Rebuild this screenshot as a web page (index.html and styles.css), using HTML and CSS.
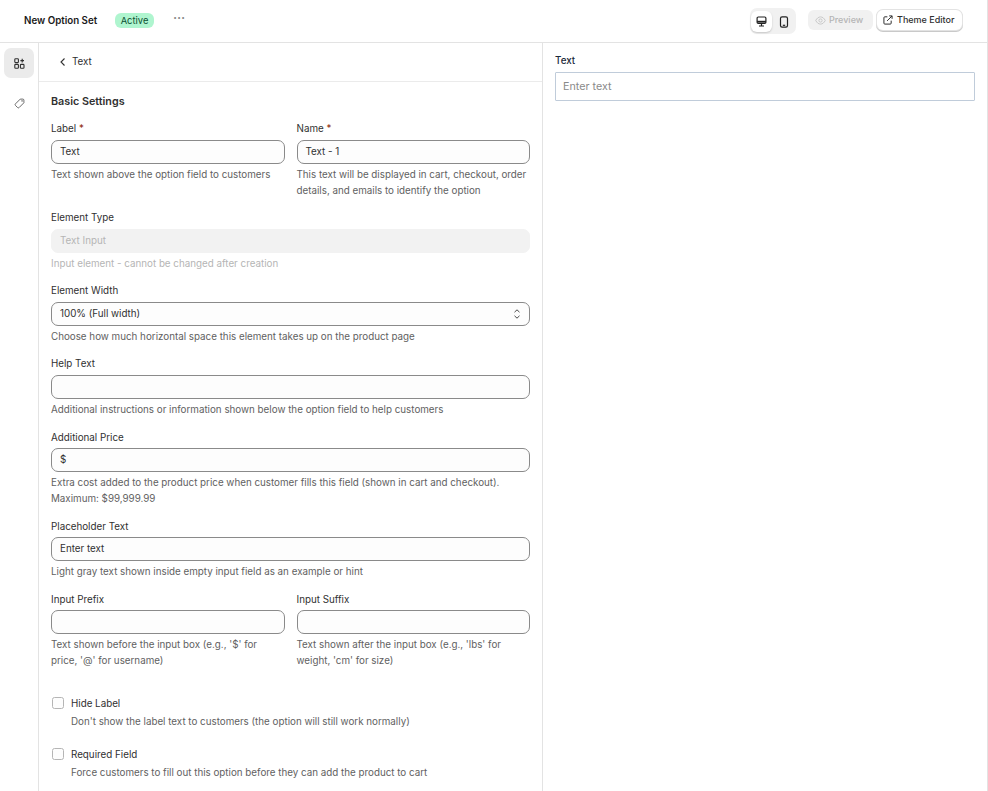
FILE: index.html
```html
<!DOCTYPE html>
<html lang="en">
<head>
<meta charset="utf-8">
<title>New Option Set</title>
<link rel="stylesheet" href="styles.css">
</head>
<body>
<header class="topbar">
  <div class="top-left">
    <h1 class="title">New Option Set</h1>
    <span class="badge">Active</span>
    <button class="more" aria-label="More">•••</button>
  </div>
  <div class="top-right">
    <div class="device-toggle">
      <span class="device active">
        <svg width="11" height="11" viewBox="0 0 11 11" fill="none" stroke="#222" stroke-width="1.2"><rect x="1.100" y="1" width="8.800" height="6.400" rx="1.200"/><path d="M1.100 5.700h8.800" stroke-width="1.800"/><path d="M5.500 7.500v2.300M3 10h5"/></svg>
      </span>
      <span class="device">
        <svg width="10" height="12" viewBox="0 0 10 12" fill="none" stroke="#222" stroke-width="1.200"><rect x="1.500" y=".8" width="7" height="10.400" rx="1.600"/><path d="M3.800 9.300h2.400"/></svg>
      </span>
    </div>
    <button class="btn btn-disabled">
      <svg width="11" height="9" viewBox="0 0 12 10" fill="none" stroke="#c4c4c4" stroke-width="1"><path d="M.7 5C2 2.500 3.800 1 6 1s4 1.500 5.300 4C10 7.500 8.200 9 6 9S2 7.500.7 5z"/><circle cx="6" cy="5" r="1.800"/></svg>
      Preview
    </button>
    <button class="btn btn-theme">
      <svg width="10" height="10" viewBox="0 0 11 11" fill="none" stroke="#303030" stroke-width="1.100"><path d="M4.800 2H2a1 1 0 0 0-1 1v6a1 1 0 0 0 1 1h6a1 1 0 0 0 1-1V6.200"/><path d="M4.500 6.500L10 1M6.800 1H10v3.200"/></svg>
      Theme Editor
    </button>
  </div>
</header>
<div class="main">
  <nav class="rail">
    <span class="rail-item active">
      <svg width="11" height="11" viewBox="0 0 11 11" fill="none" stroke="#303030" stroke-width="1.100"><rect x=".8" y=".8" width="3.600" height="3.800" rx=".8"/><rect x=".8" y="6.400" width="3.600" height="3.800" rx=".8"/><rect x="6.400" y="6.400" width="3.600" height="3.800" rx=".8"/><path d="M8.200 .8v3.600M6.400 2.600h3.600"/></svg>
    </span>
    <span class="rail-item">
      <svg width="11" height="11" viewBox="0 0 12 12" fill="none" stroke="#5c5c5c" stroke-width="1"><path d="M6.800 1.200h2.800a1.200 1.200 0 0 1 1.200 1.200v2.800L5.600 10.400a1.200 1.200 0 0 1-1.700 0L1.600 8.100a1.200 1.200 0 0 1 0-1.700z"/><circle cx="8.800" cy="3.200" r=".4"/></svg>
    </span>
  </nav>
  <section class="editor">
    <div class="crumb">
      <svg width="8" height="10" viewBox="0 0 8 10" fill="none" stroke="#303030" stroke-width="1.100"><path d="M5.500 1.500L2 5l3.500 3.500"/></svg>
      <span>Text</span>
    </div>
    <div class="form">
      <h2 class="section-title">Basic Settings</h2>
      <div class="two">
        <div class="field">
          <label class="label">Label <span class="req">*</span></label>
          <div class="input">Text</div>
          <p class="help">Text shown above the option field to customers</p>
        </div>
        <div class="field">
          <label class="label">Name <span class="req">*</span></label>
          <div class="input">Text - 1</div>
          <p class="help">This text will be displayed in cart, checkout, order details, and emails to identify the option</p>
        </div>
      </div>
      <div class="field">
        <label class="label">Element Type</label>
        <div class="input input-disabled">Text Input</div>
        <p class="help help-muted">Input element - cannot be changed after creation</p>
      </div>
      <div class="field">
        <label class="label">Element Width</label>
        <div class="input input-select">
          <span>100% (Full width)</span>
          <svg width="8" height="12" viewBox="0 0 8 12" fill="none" stroke="#4a4a4a" stroke-width="1"><path d="M1.500 4.200L4 1.800l2.500 2.400M1.500 7.800L4 10.200l2.500-2.400"/></svg>
        </div>
        <p class="help">Choose how much horizontal space this element takes up on the product page</p>
      </div>
      <div class="field">
        <label class="label">Help Text</label>
        <div class="input"></div>
        <p class="help">Additional instructions or information shown below the option field to help customers</p>
      </div>
      <div class="field">
        <label class="label">Additional Price</label>
        <div class="input">$</div>
        <p class="help">Extra cost added to the product price when customer fills this field (shown in cart and checkout). Maximum: $99,999.99</p>
      </div>
      <div class="field">
        <label class="label">Placeholder Text</label>
        <div class="input">Enter text</div>
        <p class="help">Light gray text shown inside empty input field as an example or hint</p>
      </div>
      <div class="two">
        <div class="field">
          <label class="label">Input Prefix</label>
          <div class="input"></div>
          <p class="help">Text shown before the input box (e.g., '$' for price, '@' for username)</p>
        </div>
        <div class="field">
          <label class="label">Input Suffix</label>
          <div class="input"></div>
          <p class="help">Text shown after the input box (e.g., 'lbs' for weight, 'cm' for size)</p>
        </div>
      </div>
      <div class="checks">
        <div class="check">
          <span class="box"></span>
          <div>
            <div class="check-label">Hide Label</div>
            <p class="help">Don't show the label text to customers (the option will still work normally)</p>
          </div>
        </div>
        <div class="check">
          <span class="box"></span>
          <div>
            <div class="check-label">Required Field</div>
            <p class="help">Force customers to fill out this option before they can add the product to cart</p>
          </div>
        </div>
      </div>
    </div>
  </section>
  <aside class="preview">
    <label class="preview-label">Text</label>
    <div class="preview-input">Enter text</div>
  </aside>
</div>
</body>
</html>
```
FILE: styles.css
```css
* { box-sizing: border-box; }
html, body { margin: 0; height: 100%; overflow: hidden; }
body {
  font-family: Inter, "Noto Sans", sans-serif;
  font-size: 9.800px;
  line-height: 16px;
  color: #303030;
  background: #fff;
  display: flex;
  flex-direction: column;
}
button { font: inherit; background: none; border: 0; padding: 0; }
p, h1, h2 { margin: 0; }

.topbar {
  height: 43px;
  flex: none;
  border-bottom: 1px solid #e3e3e3;
  display: flex;
  justify-content: space-between;
  align-items: center;
  padding: 0 25px 0 24px;
  border-right: 1px solid #e3e3e3;
}
.top-left { display: flex; align-items: center; }
.title { font-size: 9.750px; font-weight: 600; color: #1a1a1a; line-height: 16px; margin-right: 17.500px; }
.badge {
  background: #aff5cf;
  color: #0c5132;
  border-radius: 6px;
  height: 15px;
  line-height: 15px;
  padding: 0 6px;
  font-size: 9.400px;
  margin-top: -1px;
  margin-right: 19px;
}
.more { color: #8a8a8a; font-size: 6.500px; letter-spacing: .3px; line-height: 10px; margin-top: -6px; }

.top-right { display: flex; align-items: center; }
.device-toggle {
  display: flex;
  background: #f1f1f1;
  border-radius: 7px;
  padding: 3px 2px 2px 1px;
  height: 26px;
  margin-right: 12px;
  gap: 2px;
}
.device { width: 21px; height: 21px; display: flex; align-items: center; justify-content: center; border-radius: 6px; }
.device + .device { width: 20px; }
.device.active { background: #fff; box-shadow: 0 1px 2px rgba(0,0,0,.18); }
.btn {
  height: 20px;
  border-radius: 6px;
  display: flex;
  align-items: center;
  font-weight: 550;
  font-size: 9px;
  margin-top: -2px;
}
.btn-disabled { background: #f1f1f1; color: #b5b5b5; width: 65px; padding-left: 7px; margin-right: 4px; gap: 3px; }
.btn-theme {
  background: #fff;
  color: #303030;
  width: 85px;
  padding-left: 6px;
  gap: 4px;
  box-shadow: 0 0 0 1px #e3e3e3, 0 1px 0 1px #c9c9c9;
}

.main { flex: 1; display: flex; min-height: 0; border-right: 1px solid #e3e3e3; }
.rail {
  width: 39px;
  flex: none;
  border-right: 1px solid #e3e3e3;
  padding: 5px 4px;
  display: flex;
  flex-direction: column;
  gap: 10px;
}
.rail-item { width: 30px; height: 30px; display: flex; align-items: center; justify-content: center; border-radius: 7px; }
.rail-item.active { background: #ebebeb; }

.editor { width: 504px; flex: none; border-right: 1px solid #e3e3e3; overflow: hidden; }
.crumb {
  height: 39px;
  border-bottom: 1px solid #ebebeb;
  display: flex;
  align-items: center;
  gap: 5px;
  padding: 0 0 1px 20px;
  color: #303030;
}
.form { padding: 11.500px 12px 0; }
.section-title { font-size: 10.750px; font-weight: 600; line-height: 16px; margin-bottom: 11.450px; }
.two { display: grid; grid-template-columns: 1fr 1fr; gap: 12px; }
.field { margin-bottom: 11.550px; }
.label { display: block; margin-bottom: 2.600px; color: #303030; }
.req { color: #8e1f0b; }
.input {
  height: 24px;
  border: 1px solid #8a8a8a;
  border-radius: 7px;
  background: #fdfdfd;
  padding: 0 8px;
  line-height: 22.400px;
  margin-bottom: 3px;
  color: #303030;
}
.input-disabled { border-color: #f2f2f2; background: #f2f2f2; color: #b5b5b5; }
.input-select { display: flex; justify-content: space-between; align-items: center; padding-right: 8px; }
.help { color: #616161; }
.help-muted { color: #b5b5b5; }

.checks { margin-top: 15px; display: flex; flex-direction: column; gap: 17px; padding-left: 1px; }
.check { display: flex; gap: 7px; }
.check .help { margin-top: 2px; }
.box { width: 12px; height: 12px; border: 1px solid #b5b5b5; border-radius: 2.500px; background: #fdfdfd; margin-top: 1px; flex: none; }
.check-label { color: #303030; }

.preview { flex: 1; padding: 10px 12px 0; }
.preview-label { display: block; font-weight: 550; color: #1a2a3a; margin-bottom: 3px; }
.preview-input {
  height: 29px;
  border: 1px solid #c0ccda;
  border-radius: 1px;
  padding: 0 7px;
  line-height: 27px;
  font-size: 10.750px;
  color: #8a8a8a;
}
```
